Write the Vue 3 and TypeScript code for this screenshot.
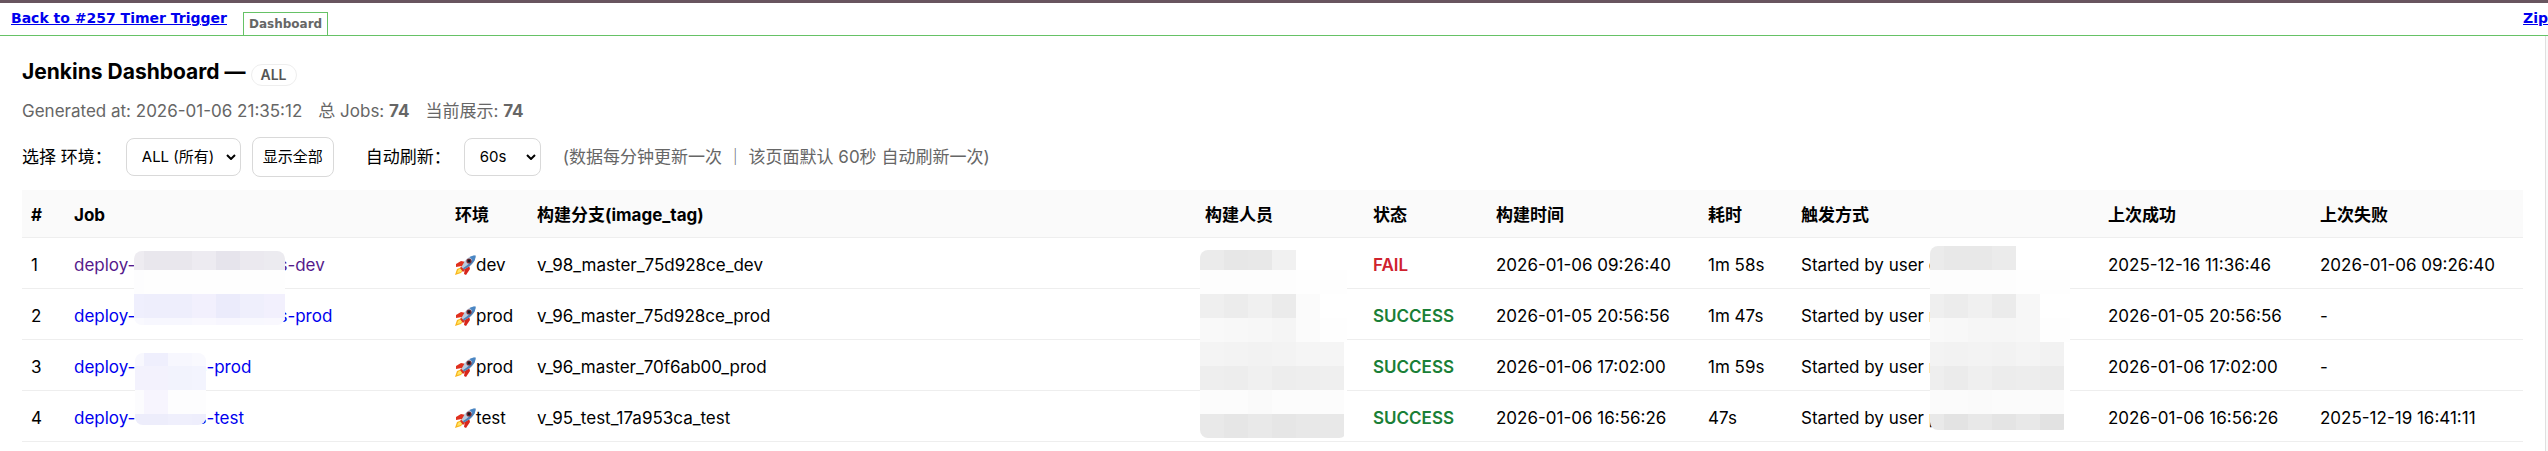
<script setup lang="ts">
import { ref } from 'vue'

interface Block { x: number; y: number; w: number; h: number; c: string }
interface Mosaic { w: number; h: number; blocks: Block[] }

/* Expands a table of colours into blocks, given the edges of its columns and rows. */
function mosaic(xs: number[], ys: number[], colours: string[][]): Mosaic {
  const blocks: Block[] = []
  colours.forEach((line, r) =>
    line.forEach((c, i) =>
      blocks.push({ x: xs[i], y: ys[r], w: xs[i + 1] - xs[i], h: ys[r + 1] - ys[r], c }),
    ),
  )
  return { w: xs[xs.length - 1], h: ys[ys.length - 1], blocks }
}

const masks: Record<string, Mosaic> = {
  jobTop: mosaic([0, 10, 34, 58, 82, 106, 130, 151], [0, 19, 43, 67, 74], [
    ['#eeecf1', '#e9e7ed', '#e9e7ed', '#edebf1', '#e6e4ec', '#ebe9ef', '#ecebf0'],
    ['#fdfdfe', '#fefefe', '#fefefe', '#fefefe', '#fefefe', '#fefefe', '#fefefe'],
    ['#efeffd', '#eeeefc', '#eeeefc', '#f2f0fd', '#ebebfb', '#efeffc', '#f2f0fd'],
    ['#f9f9fe', '#f7f7fe', '#f7f7fe', '#f9f8fe', '#f7f6fe', '#f8f8fe', '#f9f8fe'],
  ]),
  jobBottom: mosaic([0, 9, 33, 57, 71], [0, 13, 37, 61, 72], [
    ['#f8f8fe', '#efeffd', '#f7f7fe', '#f9f9fe'],
    ['#f3f2fd', '#f3f2fd', '#f2f3fd', '#f3f4fe'],
    ['#fcfcfe', '#f7f5fe', '#fdfdfe', '#fdfdfe'],
    ['#ededfb', '#ededfb', '#efeffc', '#eeeefc'],
  ]),
  builder: mosaic([0, 24, 48, 72, 96, 120, 144, 147], [0, 20, 44, 68, 92, 116, 140, 164, 188], [
    ['#ebebeb', '#e7e7e7', '#e8e8e8', '#f1f1f1', '#ffffff', '#ffffff', '#ffffff'],
    ['#fdfdfd', '#fdfdfd', '#fdfdfd', '#fdfdfd', '#fefefe', '#fefefe', '#fefefe'],
    ['#efefef', '#ececec', '#f0f0f0', '#ebebeb', '#fbfbfb', '#ffffff', '#ffffff'],
    ['#f9f9f9', '#f8f8f8', '#f7f7f7', '#f5f5f5', '#fbfbfb', '#fefefe', '#fefefe'],
    ['#f4f4f4', '#f3f3f3', '#f2f2f2', '#f3f3f3', '#f5f5f5', '#f5f5f5', '#ffffff'],
    ['#eeeeee', '#ededed', '#f0f0f0', '#ededed', '#eeeeee', '#efefef', '#ffffff'],
    ['#fcfcfc', '#fcfcfc', '#fafafa', '#fcfcfc', '#fcfcfc', '#fcfcfc', '#ffffff'],
    ['#e9e9e9', '#e6e6e6', '#e9e9e9', '#e6e6e6', '#e8e8e8', '#e8e8e8', '#ffffff'],
  ]),
  trigger: mosaic([0, 14, 38, 62, 86, 110, 134, 140], [0, 24, 48, 72, 96, 120, 144, 168, 184], [
    ['#ebebeb', '#e8e8e8', '#e8e8e8', '#ebebeb', '#ffffff', '#ffffff', '#ffffff'],
    ['#fdfdfd', '#fdfdfd', '#fdfdfd', '#fdfdfd', '#fefefe', '#fefefe', '#fefefe'],
    ['#efefef', '#ececec', '#f0f0f0', '#ebebeb', '#f7f7f7', '#ffffff', '#ffffff'],
    ['#f9f9f9', '#f8f8f8', '#f6f6f6', '#f6f6f6', '#f7f7f7', '#fefefe', '#fefefe'],
    ['#f3f3f3', '#f2f2f2', '#f3f3f3', '#f2f2f2', '#f4f4f4', '#f2f2f2', '#ffffff'],
    ['#eeeeee', '#ebebeb', '#efefef', '#ececec', '#ededed', '#ebebeb', '#ffffff'],
    ['#fbfbfb', '#fbfbfb', '#fafafa', '#fbfbfb', '#fbfbfb', '#fbfbfb', '#ffffff'],
    ['#e9e9e9', '#e3e3e3', '#e8e8e8', '#e4e4e4', '#e8e8e8', '#e2e2e2', '#ffffff'],
  ]),
}

const columns = [
  { label: '#', cls: 'c-num' },
  { label: 'Job', cls: 'c-job' },
  { label: '环境', cls: 'c-env' },
  { label: '构建分支(image_tag)', cls: 'c-tag' },
  { label: '构建人员', cls: 'c-builder' },
  { label: '状态', cls: 'c-status' },
  { label: '构建时间', cls: 'c-date' },
  { label: '耗时', cls: 'c-took' },
  { label: '触发方式', cls: 'c-trigger' },
  { label: '上次成功', cls: 'c-date' },
  { label: '上次失败', cls: 'c-date' },
]

const rows = [
  { tail: 's-dev', gap: 'wide', visited: true, env: 'dev', tag: 'v_98_master_75d928ce_dev', ok: false, time: '2026-01-06 09:26:40', took: '1m 58s', by: 'c', good: '2025-12-16 11:36:46', bad: '2026-01-06 09:26:40', jobMask: 'jobTop', first: true },
  { tail: 's-prod', gap: 'wide', visited: false, env: 'prod', tag: 'v_96_master_75d928ce_prod', ok: true, time: '2026-01-05 20:56:56', took: '1m 47s', by: 'r', good: '2026-01-05 20:56:56', bad: '-', jobMask: '', first: false },
  { tail: 's-prod', gap: 'narrow', visited: false, env: 'prod', tag: 'v_96_master_70f6ab00_prod', ok: true, time: '2026-01-06 17:02:00', took: '1m 59s', by: 'r', good: '2026-01-06 17:02:00', bad: '-', jobMask: 'jobBottom', first: false },
  { tail: 's-test', gap: 'narrow', visited: false, env: 'test', tag: 'v_95_test_17a953ca_test', ok: true, time: '2026-01-06 16:56:26', took: '47s', by: 'p', good: '2026-01-06 16:56:26', bad: '2025-12-19 16:41:11', jobMask: '', first: false },
]

const env = ref('ALL')
const refresh = ref('60')
</script>

<template>
  <div class="page">
    <header class="top">
      <a class="back" href="#">Back to #257 Timer Trigger</a>
      <a class="tab" href="#">Dashboard</a>
      <a class="zip" href="#">Zip</a>
    </header>

    <main class="body">
      <h1>Jenkins Dashboard — <span class="badge">ALL</span></h1>
      <p class="meta">
        <span>Generated at: 2026-01-06 21:35:12</span>
        <span>总 Jobs: <b>74</b></span>
        <span>当前展示: <b>74</b></span>
      </p>

      <form class="filters" @submit.prevent>
        <label for="env">选择 环境：</label>
        <span class="select env">
          <select id="env" v-model="env"><option value="ALL">ALL (所有)</option></select>
          <svg viewBox="0 0 10 6"><path d="M1 1l4 4 4-4" /></svg>
        </span>
        <button type="button" @click="env = 'ALL'">显示全部</button>
        <label class="auto" for="refresh">自动刷新：</label>
        <span class="select refresh">
          <select id="refresh" v-model="refresh"><option value="60">60s</option></select>
          <svg viewBox="0 0 10 6"><path d="M1 1l4 4 4-4" /></svg>
        </span>
        <span class="note">(数据每分钟更新一次 ｜ 该页面默认 60秒 自动刷新一次)</span>
      </form>

      <table>
        <thead>
          <tr><th v-for="c in columns" :key="c.label" :class="c.cls">{{ c.label }}</th></tr>
        </thead>
        <tbody>
          <tr v-for="(r, i) in rows" :key="i">
            <td>{{ i + 1 }}</td>
            <td class="masked">
              <a href="#" class="job" :class="{ visited: r.visited }">deploy-<span class="gap" :class="r.gap"></span>{{ r.tail }}</a>
              <svg v-if="r.jobMask" class="mask" :class="r.jobMask" :width="masks[r.jobMask].w" :height="masks[r.jobMask].h" shape-rendering="crispEdges" aria-hidden="true">
                <rect v-for="(b, k) in masks[r.jobMask].blocks" :key="k" :x="b.x" :y="b.y" :width="b.w" :height="b.h" :fill="b.c" />
              </svg>
            </td>
            <td>
              <span class="envcell">
                <svg class="rocket" viewBox="0 0 21 21" aria-hidden="true">
                  <path d="M1 9l5-3 5 1-4 4-6 1z" fill="#e0301e" />
                  <path d="M14 10l1 4-4 6-2-1 1-6z" fill="#d8261c" />
                  <path d="M7 12l-5 2-2 6 6-2 3-4z" fill="#f9b51c" />
                  <path d="M6 13l-3 2-1 3 4-1 2-3z" fill="#ffe564" />
                  <path d="M8 10l3 4-3 3-3-4z" fill="#d8321e" />
                  <path d="M20.500 0.500C16 0.500 12 3 9.500 6.500L6.500 12l2.500 2.500 5-3C18 9 20.500 5 20.500 0.500z" fill="#b9cbdc" />
                  <path d="M20.500 0.500C20.500 5 18 9 14 11.500l-5 3-1.200-1.200C13 10 17 6 20.500 0.500z" fill="#4d82b8" />
                  <path d="M20.500 0.500c-2.500 0-4.500 0.600-6 1.600l4.500 4.500c1-2 1.500-4 1.500-6.100z" fill="#4a86c4" />
                  <circle cx="14" cy="6" r="2.600" fill="#7e2b32" />
                  <circle cx="14" cy="6" r="1.400" fill="#141a24" />
                </svg>{{ r.env }}
              </span>
            </td>
            <td>{{ r.tag }}</td>
            <td class="masked">
              <svg v-if="r.first" class="mask builder" :width="masks.builder.w" :height="masks.builder.h" shape-rendering="crispEdges" aria-hidden="true">
                <rect v-for="(b, k) in masks.builder.blocks" :key="k" :x="b.x" :y="b.y" :width="b.w" :height="b.h" :fill="b.c" />
              </svg>
            </td>
            <td><strong :class="r.ok ? 'ok' : 'fail'">{{ r.ok ? 'SUCCESS' : 'FAIL' }}</strong></td>
            <td>{{ r.time }}</td>
            <td>{{ r.took }}</td>
            <td class="masked">
              Started by user {{ r.by }}
              <svg v-if="r.first" class="mask trigger" :width="masks.trigger.w" :height="masks.trigger.h" shape-rendering="crispEdges" aria-hidden="true">
                <rect v-for="(b, k) in masks.trigger.blocks" :key="k" :x="b.x" :y="b.y" :width="b.w" :height="b.h" :fill="b.c" />
              </svg>
            </td>
            <td>{{ r.good }}</td>
            <td>{{ r.bad }}</td>
          </tr>
        </tbody>
      </table>
    </main>
  </div>
</template>

<style>
body {
  margin: 0;
  background: #fff;
}
#app {
  display: flow-root;
}
</style>

<style scoped>
.page {
  min-height: 100vh;
  display: flex;
  flex-direction: column;
  overflow: hidden;
  box-sizing: border-box;
  border-top: 3px solid #68555f;
  font: 17px/24px Inter, "Noto Sans CJK SC", sans-serif;
  color: #000;
}
.top {
  display: flex;
  align-items: flex-start;
  height: 32px;
  padding-left: 11px;
  border-bottom: 1px solid #66c266;
  font-family: "DejaVu Sans", sans-serif;
  font-weight: bold;
}
.back,
.zip {
  margin-top: 6px;
  font-size: 14px;
  line-height: 18px;
  color: #00e;
  white-space: nowrap;
}
.tab {
  box-sizing: border-box;
  height: 23px;
  margin: 9px 0 0 16px;
  padding: 0 5px;
  border: 1px solid #66c266;
  border-bottom: 0;
  font-size: 12px;
  line-height: 22px;
  color: #666;
  text-decoration: none;
}
.zip {
  margin-left: auto;
}
.body {
  flex: 1;
  padding: 24px 22px 8px;
  margin-right: 2px;
  border-right: 1px solid #e0e0e0;
  box-shadow: 2px 0 0 #fafafa;
}
h1 {
  display: flex;
  align-items: flex-start;
  gap: 5px;
  margin: 0;
  font-size: 21px;
  line-height: 24px;
  font-weight: 700;
}
.badge {
  margin-top: 4px;
  padding: 0 9px;
  border: 1px solid #eee;
  border-radius: 11px;
  font-size: 14px;
  line-height: 20px;
  font-weight: 600;
  color: #555;
}
.meta {
  display: flex;
  gap: 16px;
  margin: 13px 0 14px;
  color: #666;
}
.filters {
  display: flex;
  align-items: center;
  height: 40px;
  margin-bottom: 13px;
}
.select {
  position: relative;
  display: flex;
}
.env {
  width: 115px;
  margin: 0 11px 0 14px;
}
.refresh {
  width: 77px;
  margin: 0 22px 0 13px;
}
.auto {
  margin-left: 32px;
}
select,
button {
  box-sizing: border-box;
  height: 38px;
  border: 1px solid #d9d9d9;
  border-radius: 8px;
  background: #fff;
  color: #000;
  font: 15px/20px Inter, "Noto Sans CJK SC", sans-serif;
}
select {
  width: 100%;
  padding: 0 0 0 15px;
  appearance: none;
}
.select svg {
  position: absolute;
  right: 5px;
  top: 16px;
  width: 10px;
  height: 6px;
  fill: none;
  stroke: #000;
  stroke-width: 2;
  pointer-events: none;
}
button {
  height: 40px;
  padding: 0 10px;
}
.note {
  color: #666;
  white-space: nowrap;
}
table {
  width: 100%;
  table-layout: fixed;
  border-collapse: separate;
  border-spacing: 0;
}
th,
td {
  box-sizing: border-box;
  padding: 2px 9px 0;
  border-bottom: 1px solid #eee;
  text-align: left;
  white-space: nowrap;
}
th {
  height: 48px;
  background: #fafafa;
  font-weight: 700;
}
td {
  height: 51px;
  padding-top: 4px;
}
.c-num { width: 43px; }
.c-job { width: 381px; }
.c-env { width: 82px; }
.c-builder { width: 168px; }
.c-status { width: 123px; }
.c-date { width: 212px; }
.c-took { width: 93px; }
.c-trigger { width: 307px; }
.masked {
  position: relative;
}
.job {
  color: #00e;
  text-decoration: none;
}
.visited {
  color: #551a8b;
}
.gap {
  display: inline-block;
}
.wide { width: 143px; }
.narrow { width: 62px; }
.mask {
  position: absolute;
  z-index: 1;
  border-radius: 8px;
}
.jobTop { left: 69px; top: 13px; }
.jobBottom { left: 70px; top: 13px; }
.builder { left: 4px; top: 12px; }
.trigger { left: 138px; top: 8px; }
.envcell {
  display: flex;
  align-items: center;
}
.rocket {
  width: 21px;
  height: 21px;
}
.ok,
.fail {
  font-weight: 600;
  color: #1a7f37;
}
.fail {
  color: #cf222e;
}
</style>
